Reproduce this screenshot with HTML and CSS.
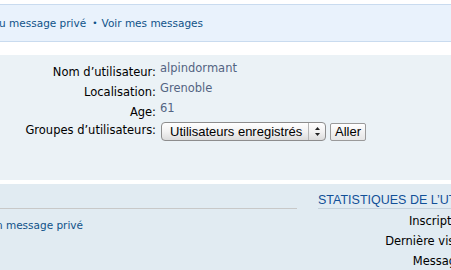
FILE: index.html
```html
<!DOCTYPE html>
<html lang="fr">
    <head>
        <meta charset="utf-8">
        <title>Profil - alpindormant</title>
        <link rel="stylesheet" href="styles.css">
    </head>
    <body>
        <div class="Page">
            <!-- barre de liens -->
            <div class="NavBar">
                <a class="NavLink First" href="#">Aucun nouveau message privé</a>
                <span class="Bullet">•</span>
                <a class="NavLink" href="#">Voir mes messages</a>
            </div>

            <!-- profil -->
            <div class="Panel Profile">
                <div class="Details">
                    <div class="Label">Nom d’utilisateur:</div>
                    <div class="Value">alpindormant</div>

                    <div class="Label">Localisation:</div>
                    <div class="Value">Grenoble</div>

                    <div class="Label">Age:</div>
                    <div class="Value">61</div>

                    <div class="Label LabelGroup">Groupes d’utilisateurs:</div>
                    <div class="Value ValueGroup">
                        <div class="Select">
                            <span class="SelectText">Utilisateurs enregistrés</span>
                            <span class="SelectArrows">
                                <svg width="7" height="11" viewBox="0 0 7 11">
                                    <path d="M3.5 1 L6 4 L1 4 Z" fill="#222"/>
                                    <path d="M3.5 10 L6 7 L1 7 Z" fill="#222"/>
                                </svg>
                            </span>
                        </div>
                        <button class="GoBtn" type="button">Aller</button>
                    </div>
                </div>
            </div>

            <!-- contact / statistiques -->
            <div class="Panel Stats">
                <div class="ColLeft">
                    <div class="LeftHead"></div>
                    <a class="NavLink LeftLink" href="#">Envoyer un message privé</a>
                </div>
                <div class="ColRight">
                    <h3 class="StatsTitle">Statistiques de l’utilisateur</h3>
                    <div class="StatsRows">
                        <div class="StatsLabel">Inscription:</div>
                        <div class="StatsLabel">Dernière visite:</div>
                        <div class="StatsLabel">Messages:</div>
                    </div>
                </div>
            </div>
        </div>
    </body>
</html>
```

FILE: styles.css
```css
body{
    margin: 0;
    width: 451px;
    height: 270px;
    overflow: hidden;
    background: #fff;
    font-family: "DejaVu Sans", Verdana, sans-serif;
    font-size: 10.5px;
}

.Page{
    padding-top: 4px;
}

.NavBar{
    background: #e9f2fc;
    border-top: 1px solid #c9dbef;
    border-bottom: 1px solid #c9dbef;
    height: 36px;
    display: flex;
    align-items: center;
    white-space: nowrap;
}

.NavLink{
    color: #105289;
    text-decoration: none;
}

.First{
    margin-left: -76px;
}

.Bullet{
    color: #105289;
    font-size: 9px;
    margin: 0 4px 0 6px;
}

.Panel{
    overflow: hidden;
}

.Profile{
    margin-top: 13px;
    background: #ebf2f6;
    height: 125px;
}

.Details{
    display: grid;
    grid-template-columns: 156px auto;
    grid-auto-rows: 20px;
    align-items: start;
    margin-top: 6px;
    line-height: 14px;
    font-size: 11.5px;
}

.Label{
    text-align: right;
    color: #000;
    padding-top: 4px;
    white-space: nowrap;
}

.Value{
    color: #536482;
    padding-left: 4px;
    white-space: nowrap;
}

.LabelGroup{
    padding-top: 2px;
}

.ValueGroup{
    display: flex;
    align-items: center;
    gap: 4px;
    padding-left: 5px;
    margin-top: 1px;
}

.Select{
    width: 163px;
    height: 17px;
    border: 1px solid #8d8d8d;
    border-radius: 4px;
    background: linear-gradient(#ffffff, #f2f2f2 50%, #dcdcdc);
    display: flex;
    align-items: center;
    font-family: "Liberation Sans", Arial, sans-serif;
    font-size: 13px;
    color: #000;
}

.SelectText{
    flex: 1;
    padding-left: 8px;
}

.SelectArrows{
    width: 16px;
    height: 17px;
    border-left: 1px solid #b5b5b5;
    display: flex;
    align-items: center;
    justify-content: center;
}

.GoBtn{
    height: 18px;
    padding: 0 4px;
    border: 1px solid #9a9a9a;
    border-radius: 2px;
    background: linear-gradient(#ffffff, #e6e6e6);
    font-family: "Liberation Sans", Arial, sans-serif;
    font-size: 13px;
    color: #000;
}

.Stats{
    margin-top: 4px;
    background: #e1ebf2;
    height: 86px;
    display: flex;
}

.ColLeft{
    width: 297px;
    flex: 0 0 297px;
}

.LeftHead{
    height: 24px;
    border-bottom: 1px solid #c8c8c8;
}

.LeftLink{
    display: block;
    margin-left: -57px;
    margin-top: 10px;
    white-space: nowrap;
}

.ColRight{
    margin-left: 21px;
    flex: 1;
    min-width: 0;
}

.StatsTitle{
    margin: 0;
    margin-top: 10px;
    font-family: "Liberation Sans", Arial, sans-serif;
    font-weight: normal;
    font-size: 12.5px;
    text-transform: uppercase;
    color: #115098;
    white-space: nowrap;
    border-bottom: 1px solid #c6d2dc;
    line-height: 13px;
    padding-bottom: 1px;
}

.StatsRows{
    margin-top: 5px;
}

.StatsLabel{
    width: 155px;
    text-align: right;
    color: #000;
    height: 20px;
    line-height: 14px;
    font-size: 11.5px;
    white-space: nowrap;
}
```
